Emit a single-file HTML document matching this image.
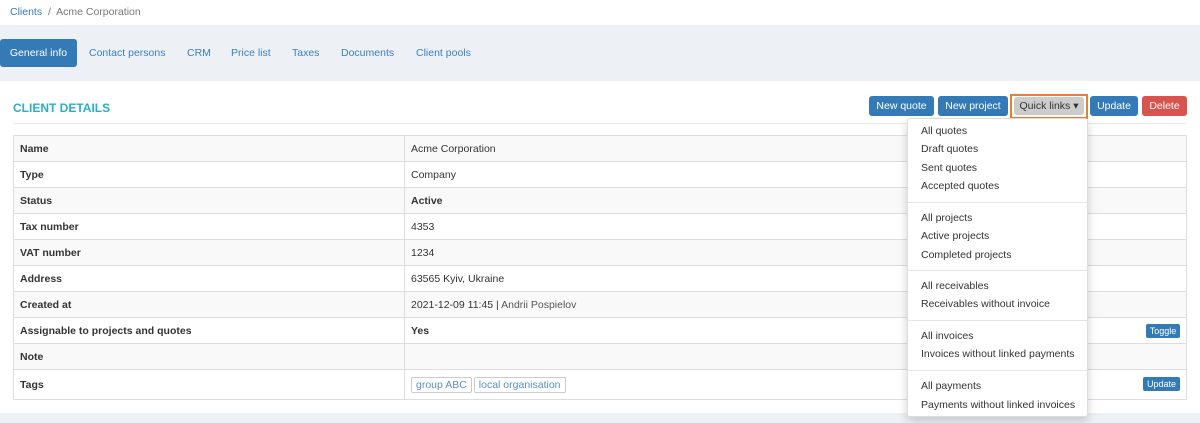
<!DOCTYPE html>
<html><head><style>
*{margin:0;padding:0;box-sizing:border-box}
body{width:1200px;height:423px;overflow:hidden;background:#fff;font-family:"Liberation Sans",sans-serif;font-size:10.5px;color:#333;position:relative}
.a{position:absolute}
.bc{left:10px;top:6px;color:#777;font-size:10.5px}
.bc span{color:#337ab7}
.tabbar{left:0;top:25px;width:1200px;height:56px;background:#edf0f5}
.tab{top:39px;height:28px;line-height:28px;color:#3a7fc0;font-size:10.5px}
.act{left:0;width:77px;background:#337ab7;color:#fff;border-radius:3px;text-align:center}
.foot{left:0;top:413px;width:1200px;height:10px;background:#edf0f5}
.title{left:13px;top:101px;color:#2ab0c5;font-weight:bold;font-size:12px}
.hr{left:13px;top:123px;width:1174px;height:1px;background:#e8e8e8}
.btn{top:96px;height:20px;line-height:20px;color:#fff;background:#337ab7;border-radius:3px;text-align:center;font-size:10.5px}
table{position:absolute;left:13px;top:135px;width:1174px;border-collapse:collapse}
td{border:1px solid #ddd;height:26px;padding:0 6px;vertical-align:middle}
tr:nth-child(odd) td{background:#f9f9f9}
td:first-child{width:391px;font-weight:bold}
.b{font-weight:bold}
.tag{display:inline-block;border:1px solid #ccc;border-radius:2px;padding:1px 4px;color:#5a8fc8;margin-right:2px}
.sb{height:14px;line-height:14px;font-size:9px;background:#337ab7;color:#fff;border-radius:2px;text-align:center}
.dd{left:907px;top:118px;width:181px;height:299px;background:#fff;border:1px solid #ddd;border-radius:3px;box-shadow:0 4px 10px rgba(0,0,0,.18);z-index:5}
.dd div{position:absolute;left:13px;color:#333;font-size:10.5px}
.dd hr{position:absolute;left:0;width:179px;border:0;border-top:1px solid #e5e5e5}
</style></head><body>
<div class="a bc"><span>Clients</span> &nbsp;/&nbsp; Acme Corporation</div>
<div class="a tabbar"></div>
<div class="a tab act">General info</div>
<div class="a tab" style="left:89px">Contact persons</div>
<div class="a tab" style="left:187px">CRM</div>
<div class="a tab" style="left:231px">Price list</div>
<div class="a tab" style="left:292px">Taxes</div>
<div class="a tab" style="left:341px">Documents</div>
<div class="a tab" style="left:416px">Client pools</div>
<div class="a title">CLIENT DETAILS</div>
<div class="a hr"></div>
<div class="a foot"></div>
<div class="a btn" style="left:869px;width:65px">New quote</div>
<div class="a btn" style="left:938px;width:70px">New project</div>
<div class="a" style="left:1010px;top:94px;width:78px;height:25px;border:2px solid #ed7d31;"></div>
<div class="a btn" style="left:1014px;width:70px;background:#ccc;color:#333;top:97px;height:18px;line-height:18px">Quick links ▾</div>
<div class="a btn" style="left:1090px;width:48px">Update</div>
<div class="a btn" style="left:1142px;width:45px;background:#d9534f">Delete</div>
<table>
<tr><td>Name</td><td>Acme Corporation</td></tr>
<tr><td>Type</td><td>Company</td></tr>
<tr><td>Status</td><td class="b">Active</td></tr>
<tr><td>Tax number</td><td>4353</td></tr>
<tr><td>VAT number</td><td>1234</td></tr>
<tr><td>Address</td><td>63565 Kyiv, Ukraine</td></tr>
<tr><td>Created at</td><td>2021-12-09 11:45 | <span style="color:#555">Andrii Pospielov</span></td></tr>
<tr><td>Assignable to projects and quotes</td><td class="b">Yes</td></tr>
<tr><td>Note</td><td></td></tr>
<tr><td style="height:30px">Tags</td><td><span class="tag">group ABC</span><span class="tag">local organisation</span></td></tr>
</table>
<div class="a sb" style="left:1146px;top:324px;width:34px">Toggle</div>
<div class="a sb" style="left:1143px;top:377px;width:37px">Update</div>
<div class="a dd">
<div style="top:6px">All quotes</div>
<div style="top:24px">Draft quotes</div>
<div style="top:43px">Sent quotes</div>
<div style="top:61px">Accepted quotes</div>
<hr style="top:83px">
<div style="top:93px">All projects</div>
<div style="top:111px">Active projects</div>
<div style="top:130px">Completed projects</div>
<hr style="top:151px">
<div style="top:161px">All receivables</div>
<div style="top:179px">Receivables without invoice</div>
<hr style="top:201px">
<div style="top:211px">All invoices</div>
<div style="top:229px">Invoices without linked payments</div>
<hr style="top:251px">
<div style="top:261px">All payments</div>
<div style="top:280px">Payments without linked invoices</div>
</div>
</body></html>
